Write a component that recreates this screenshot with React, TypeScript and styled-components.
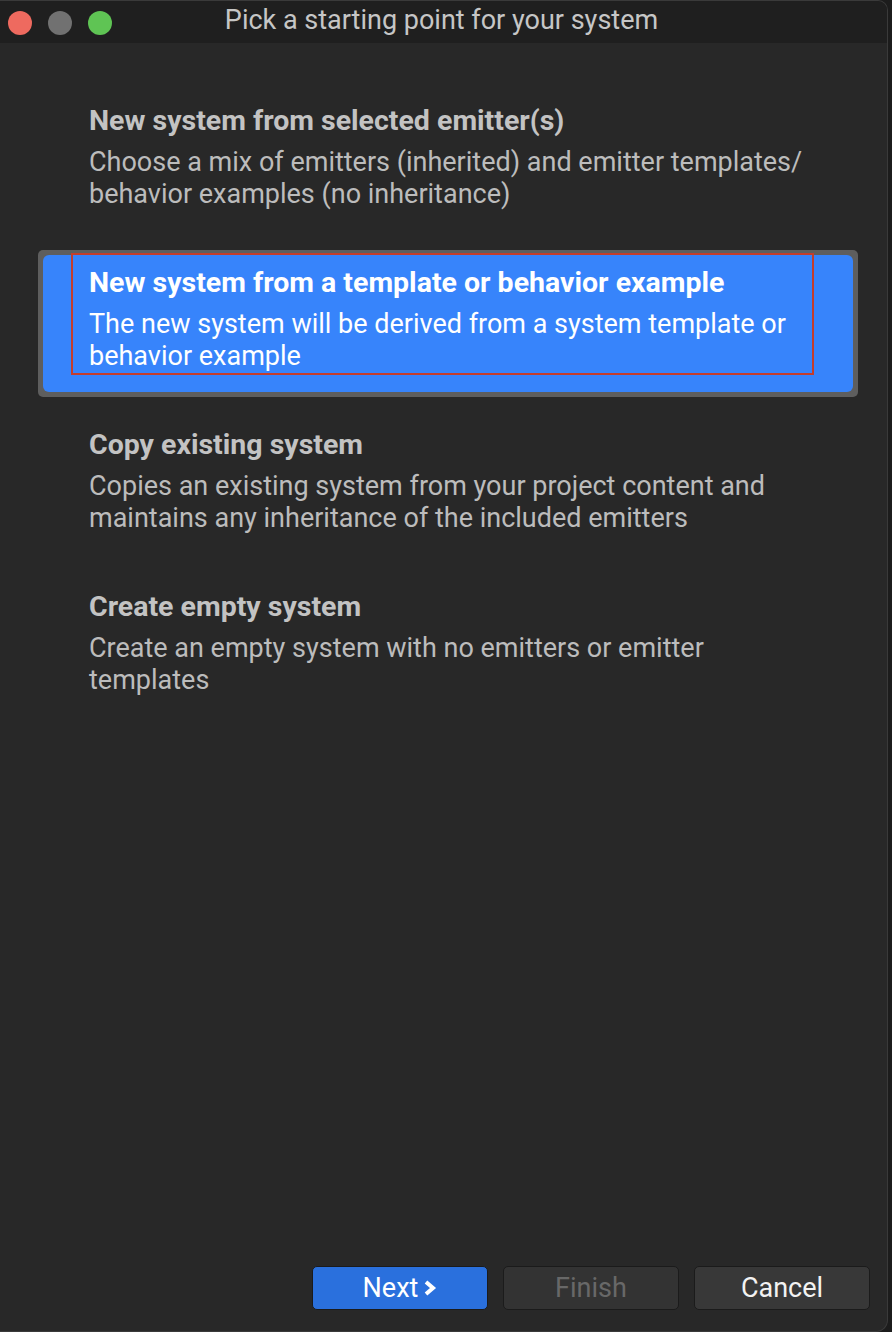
import React from "react";
import styled, { createGlobalStyle } from "styled-components";

const GlobalStyle = createGlobalStyle`
  html, body {
    margin: 0;
    padding: 0;
    background: #1c1c1c;
  }
  body {
    font-family: Roboto, "Liberation Sans", sans-serif;
  }
`;

const Window = styled.div`
  width: 888px;
  height: 1332px;
  box-sizing: border-box;
  display: flex;
  flex-direction: column;
  background: #282828;
  border: 1px solid #3a3a3a;
  border-left: none;
  border-radius: 0 10px 12px 0;
  overflow: hidden;
`;

const TitleBar = styled.div`
  position: relative;
  height: 42px;
  flex: none;
  display: flex;
  align-items: center;
  justify-content: center;
  background: #1f1f1f;
`;

const Lights = styled.div`
  position: absolute;
  left: 8px;
  top: 10px;
  display: flex;
  gap: 16px;
`;

const Light = styled.span<{ $color: string }>`
  width: 24px;
  height: 24px;
  border-radius: 50%;
  background: ${(p) => p.$color};
`;

const WindowTitle = styled.div`
  font-size: 27px;
  color: #c6c6c6;
  margin-right: 4px;
  margin-top: -4px;
`;

const List = styled.div`
  flex: 1;
  display: flex;
  flex-direction: column;
  gap: 15px;
  padding: 45px 29px 0 38px;
`;

const Item = styled.div<{ $selected?: boolean }>`
  padding: 5px;
  border-radius: 5px;
  background: ${(p) => (p.$selected ? "#5e5e5e" : "transparent")};
`;

const ItemInner = styled.div<{ $selected?: boolean }>`
  height: 137px;
  box-sizing: border-box;
  display: flex;
  flex-direction: column;
  padding-left: 28px;
  border-radius: 6px;
  background: ${(p) => (p.$selected ? "#3784fb" : "transparent")};
`;

const FocusFrame = styled.div<{ $selected?: boolean }>`
  margin: -2px 39px 0 0;
  padding: 12px 16px 1px 16px;
  border: 2px solid ${(p) => (p.$selected ? "#c43d2b" : "transparent")};
  white-space: nowrap;
`;

const ItemTitle = styled.div<{ $selected?: boolean }>`
  font-size: 28.5px;
  font-weight: 700;
  line-height: 32px;
  color: ${(p) => (p.$selected ? "#ffffff" : "#c3c3c3")};
  margin-bottom: 9px;
`;

const ItemDesc = styled.div<{ $selected?: boolean }>`
  font-size: 27px;
  line-height: 32px;
  color: ${(p) => (p.$selected ? "#ffffff" : "#bcbcbc")};
`;

const Footer = styled.div`
  flex: none;
  display: flex;
  justify-content: flex-end;
  gap: 15px;
  padding: 0 17px 21px 0;
`;

const Button = styled.button<{ $variant?: "primary" | "disabled" }>`
  width: 176px;
  height: 44px;
  box-sizing: border-box;
  display: flex;
  align-items: center;
  justify-content: center;
  gap: 4px;
  border-radius: 5px;
  border: 1px solid #1b1b1b;
  font-family: Roboto, "Liberation Sans", sans-serif;
  font-size: 27px;
  padding: 0;
  background: ${(p) => (p.$variant === "primary" ? "#2a70dd" : p.$variant === "disabled" ? "#333333" : "#383838")};
  color: ${(p) => (p.$variant === "primary" ? "#ffffff" : p.$variant === "disabled" ? "#686868" : "#f2f2f2")};
`;

const options = [
  {
    title: "New system from selected emitter(s)",
    desc: ["Choose a mix of emitters (inherited) and emitter templates/", "behavior examples (no inheritance)"],
  },
  {
    title: "New system from a template or behavior example",
    desc: ["The new system will be derived from a system template or", "behavior example"],
    selected: true,
  },
  {
    title: "Copy existing system",
    desc: ["Copies an existing system from your project content and", "maintains any inheritance of the included emitters"],
  },
  {
    title: "Create empty system",
    desc: ["Create an empty system with no emitters or emitter", "templates"],
  },
];

const Chevron = () => (
  <svg width="15" height="18" viewBox="0 0 15 18">
    <polyline points="4,3 11,9 4,15" fill="none" stroke="#fff" strokeWidth="4" />
  </svg>
);

export default function App() {
  return (
    <>
      <GlobalStyle />
      <Window>
        <TitleBar>
          <Lights>
            <Light $color="#ee6a5f" />
            <Light $color="#717171" />
            <Light $color="#5fc454" />
          </Lights>
          <WindowTitle>Pick a starting point for your system</WindowTitle>
        </TitleBar>
        <List>
          {options.map((o) => (
            <Item key={o.title} $selected={o.selected}>
              <ItemInner $selected={o.selected}>
                <FocusFrame $selected={o.selected}>
                  <ItemTitle $selected={o.selected}>{o.title}</ItemTitle>
                  <ItemDesc $selected={o.selected}>
                    {o.desc[0]}
                    <br />
                    {o.desc[1]}
                  </ItemDesc>
                </FocusFrame>
              </ItemInner>
            </Item>
          ))}
        </List>
        <Footer>
          <Button $variant="primary">
            Next
            <Chevron />
          </Button>
          <Button $variant="disabled">Finish</Button>
          <Button>Cancel</Button>
        </Footer>
      </Window>
    </>
  );
}
